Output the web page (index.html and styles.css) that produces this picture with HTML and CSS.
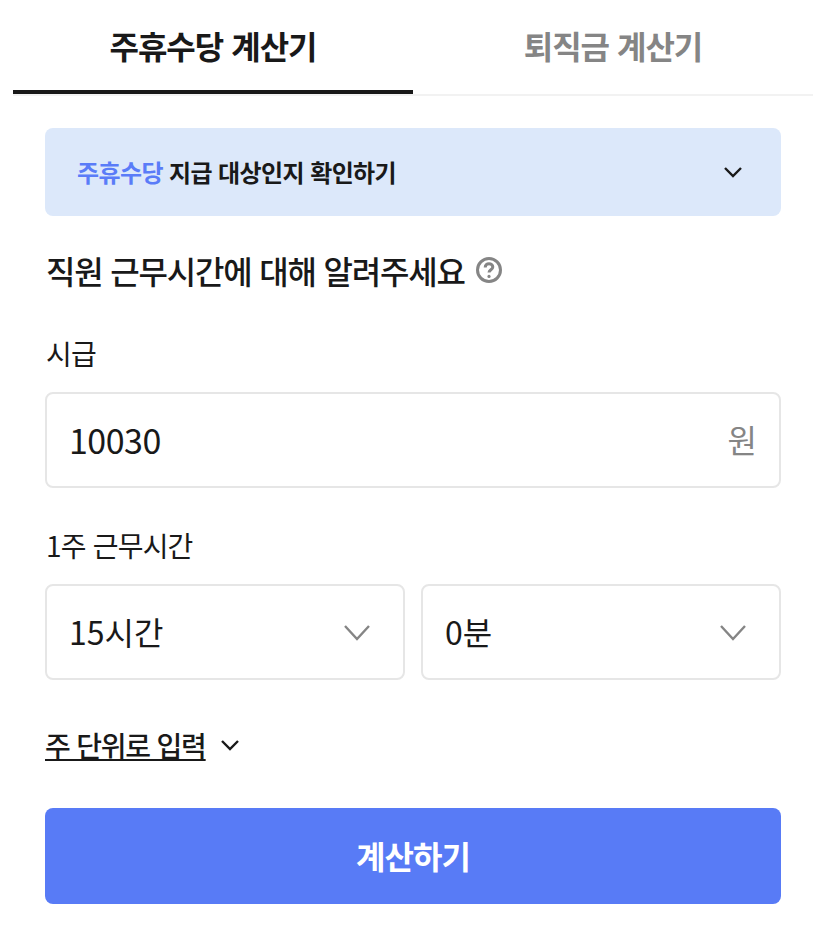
FILE: index.html
```html
<!DOCTYPE html>
<html lang="ko">
<head>
    <meta charset="UTF-8">
    <meta name="viewport" content="width=device-width, initial-scale=1.0">
    <title>주휴수당 계산기</title>
    <link rel="stylesheet" href="styles.css">
</head>
<body>

    <div class="tabs">
        <div class="tab active">주휴수당 계산기</div>
        <div class="tab">퇴직금 계산기</div>
    </div>

    <div class="content">
        <div class="notice">
            <span class="notice-text"><em>주휴수당</em> 지급 대상인지 확인하기</span>
            <svg class="small-arrow" width="24" height="24" viewBox="0 0 24 24"><path d="M4 8 12 16l8-8" /></svg>
        </div>

        <h2 class="title">
            직원 근무시간에 대해 알려주세요
            <svg class="help" width="28" height="28" viewBox="0 0 28 28">
                <circle cx="14" cy="14" r="11.5" />
                <path d="M10.2 11.4c0-2.3 1.7-3.7 3.8-3.7s3.8 1.3 3.8 3.3c0 2.7-3.8 2.9-3.8 5.6" />
                <circle class="dot" cx="14" cy="20.4" r="1.6" />
            </svg>
        </h2>

        <div class="label">시급</div>
        <div class="field">
            <span class="number">10030</span>
            <span class="unit">원</span>
        </div>

        <div class="label label-hours">1주 근무시간</div>
        <div class="selects">
            <div class="field">
                <span>15시간</span>
                <svg class="select-arrow" width="28" height="28" viewBox="0 0 28 28"><path d="M2 7 14 20 26 7" /></svg>
            </div>
            <div class="field">
                <span>0분</span>
                <svg class="select-arrow" width="28" height="28" viewBox="0 0 28 28"><path d="M2 7 14 20 26 7" /></svg>
            </div>
        </div>

        <div class="week-link">
            <span class="week-text">주 단위로 입력</span>
            <svg class="small-arrow" width="24" height="24" viewBox="0 0 24 24"><path d="M4 8 12 16l8-8" /></svg>
        </div>

        <button class="submit">계산하기</button>
    </div>

</body>
</html>
```

FILE: styles.css
```css
body {
    margin: 0;
    width: 813px;
    background: white;
    color: #191919;
    font-family: "Noto Sans CJK KR", "Noto Sans", sans-serif;
}

.tabs {
    display: flex;
    margin-left: 13px;
    height: 96px;
    box-sizing: border-box;
    border-bottom: 2px solid #f2f2f2;
}

.tab {
    flex: 1;
    height: 94px;
    box-sizing: border-box;
    padding-top: 22px;
    text-align: center;
    font-size: 32px;
    line-height: 46px;
    font-weight: 700;
    letter-spacing: -1px;
    color: #858585;
}

.tab.active {
    color: #191919;
    border-bottom: 4px solid #191919;
}

.content {
    padding: 32px 32px 0 45px;
}

.notice {
    display: flex;
    align-items: center;
    justify-content: space-between;
    height: 88px;
    padding: 0 36px 0 32px;
    background: #dce8fa;
    border-radius: 8px;
}

.notice-text {
    font-size: 24px;
    line-height: 36px;
    font-weight: 700;
    letter-spacing: -0.6px;
}

.notice-text em {
    font-style: normal;
    color: #5a7cf8;
}

.small-arrow {
    fill: none;
    stroke: #191919;
    stroke-width: 2.4;
}

.title {
    display: flex;
    align-items: center;
    gap: 10px;
    margin: 32px 0 0 1px;
    font-size: 32px;
    line-height: 44px;
    font-weight: 500;
    letter-spacing: -1.2px;
}

.help {
    fill: none;
    stroke: #858585;
    stroke-width: 3;
}

.help .dot {
    fill: #858585;
    stroke: none;
}

.label {
    margin: 41px 0 0 1px;
    font-size: 28px;
    line-height: 40px;
    letter-spacing: -0.8px;
}

.label-hours {
    margin-top: 37px;
}

.field {
    display: flex;
    align-items: center;
    justify-content: space-between;
    flex: 1;
    height: 96px;
    margin-top: 19px;
    box-sizing: border-box;
    padding: 0 22px 2px;
    border: 2px solid #e6e6e6;
    border-radius: 8px;
    font-size: 32px;
}

.number {
    font-size: 34px;
    letter-spacing: -0.5px;
}

.unit {
    color: #858585;
}

.selects {
    display: flex;
    gap: 16px;
}

.select-arrow {
    margin: 4px 10px 0 0;
    fill: none;
    stroke: #858585;
    stroke-width: 2.4;
}

.week-link {
    display: flex;
    align-items: center;
    gap: 12px;
    margin-top: 45px;
    height: 40px;
}

.week-text {
    font-size: 28px;
    line-height: 40px;
    font-weight: 500;
    letter-spacing: -1.2px;
    text-decoration: underline;
}

.submit {
    display: block;
    width: 100%;
    height: 96px;
    margin-top: 43px;
    padding-bottom: 4px;
    background: #587bf6;
    color: white;
    border: none;
    border-radius: 8px;
    font-family: inherit;
    font-size: 32px;
    font-weight: 700;
    letter-spacing: -1px;
}
```
